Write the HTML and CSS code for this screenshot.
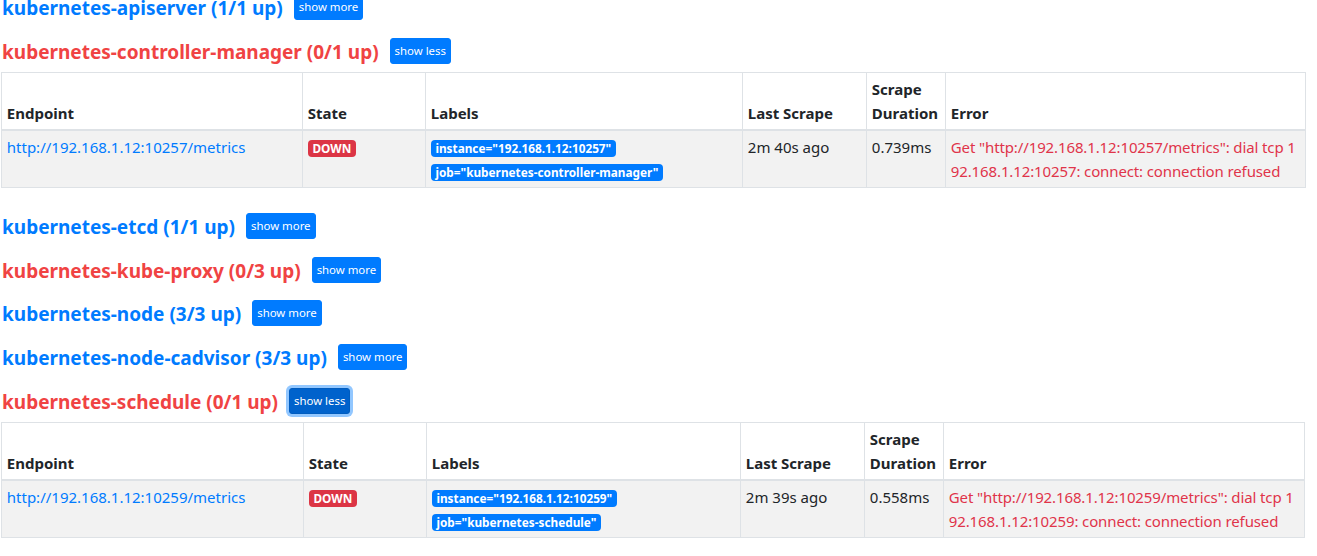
FILE: index.html
```html
<!DOCTYPE html>
<html>
<head>
<meta charset="utf-8">
<link rel="stylesheet" href="styles.css">
</head>
<body>
<div class="page">
  <section class="pool">
    <div class="pool-head">
      <h2 class="pool-title"><a class="up">kubernetes-apiserver (1/1 up)</a></h2>
      <button class="btn">show more</button>
    </div>
  </section>

  <section class="pool">
    <div class="pool-head">
      <h2 class="pool-title"><a class="down">kubernetes-controller-manager (0/1 up)</a></h2>
      <button class="btn">show less</button>
    </div>
    <table class="targets">
      <colgroup>
        <col class="c-endpoint"><col class="c-state"><col class="c-labels"><col class="c-last"><col class="c-dur"><col class="c-err">
      </colgroup>
      <thead>
        <tr><th>Endpoint</th><th>State</th><th>Labels</th><th>Last Scrape</th><th>Scrape Duration</th><th>Error</th></tr>
      </thead>
      <tbody>
        <tr>
          <td><a class="endpoint">http://192.168.1.12:10257/metrics</a></td>
          <td><span class="badge badge-down">DOWN</span></td>
          <td>
            <div class="label-line"><span class="badge badge-label">instance="192.168.1.12:10257"</span></div>
            <div class="label-line"><span class="badge badge-label">job="kubernetes-controller-manager"</span></div>
          </td>
          <td>2m 40s ago</td>
          <td>0.739ms</td>
          <td class="err">Get "http://192.168.1.12:10257/metrics": dial tcp 192.168.1.12:10257: connect: connection refused</td>
        </tr>
      </tbody>
    </table>
  </section>

  <section class="pool">
    <div class="pool-head">
      <h2 class="pool-title"><a class="up">kubernetes-etcd (1/1 up)</a></h2>
      <button class="btn">show more</button>
    </div>
  </section>

  <section class="pool">
    <div class="pool-head">
      <h2 class="pool-title"><a class="down">kubernetes-kube-proxy (0/3 up)</a></h2>
      <button class="btn">show more</button>
    </div>
  </section>

  <section class="pool">
    <div class="pool-head">
      <h2 class="pool-title"><a class="up">kubernetes-node (3/3 up)</a></h2>
      <button class="btn">show more</button>
    </div>
  </section>

  <section class="pool">
    <div class="pool-head">
      <h2 class="pool-title"><a class="up">kubernetes-node-cadvisor (3/3 up)</a></h2>
      <button class="btn">show more</button>
    </div>
  </section>

  <section class="pool">
    <div class="pool-head">
      <h2 class="pool-title"><a class="down">kubernetes-schedule (0/1 up)</a></h2>
      <button class="btn btn-focus">show less</button>
    </div>
    <table class="targets">
      <colgroup>
        <col class="c-endpoint2"><col class="c-state"><col class="c-labels2"><col class="c-last"><col class="c-dur"><col class="c-err2">
      </colgroup>
      <thead>
        <tr><th>Endpoint</th><th>State</th><th>Labels</th><th>Last Scrape</th><th>Scrape Duration</th><th>Error</th></tr>
      </thead>
      <tbody>
        <tr>
          <td><a class="endpoint">http://192.168.1.12:10259/metrics</a></td>
          <td><span class="badge badge-down">DOWN</span></td>
          <td>
            <div class="label-line"><span class="badge badge-label">instance="192.168.1.12:10259"</span></div>
            <div class="label-line"><span class="badge badge-label">job="kubernetes-schedule"</span></div>
          </td>
          <td>2m 39s ago</td>
          <td>0.558ms</td>
          <td class="err">Get "http://192.168.1.12:10259/metrics": dial tcp 192.168.1.12:10259: connect: connection refused</td>
        </tr>
      </tbody>
    </table>
  </section>
</div>
</body>
</html>
```

FILE: styles.css
```css
* { box-sizing: border-box; }
html, body { margin: 0; padding: 0; background: #fff; }
body {
  font-family: "Noto Sans", "Open Sans", sans-serif;
  font-size: 15px;
  line-height: 24px;
  color: #212529;
  overflow: hidden;
}
.page {
  margin-top: -6px;
  padding-left: 1px;
  width: 1305px;
}
.pool { padding-bottom: 9.6px; }
.pool-head {
  display: flex;
  align-items: center;
  gap: 11px;
  height: 26px;
  margin-bottom: 8px;
}
.pool-title {
  margin: 0;
  font-size: 19px;
  font-weight: 700;
  line-height: 26px;
  padding-left: 1px;
  padding-top: 2px;
}
.pool-title a { text-decoration: none; }
.pool-title .up { color: #007bff; }
.pool-title .down { color: #f04343; }

.btn {
  font-family: inherit;
  font-size: 11.4px;
  line-height: 18px;
  padding: 3px 4px;
  border: 1px solid #007bff;
  background: #007bff;
  color: #fff;
  border-radius: 3px;
  height: 26px;
  cursor: pointer;
}
.btn-focus {
  background: #0062cc;
  border-color: #005cbf;
  box-shadow: 0 0 0 3px rgba(38, 143, 255, 0.5);
}

.targets {
  width: 1304px;
  table-layout: fixed;
  border-collapse: collapse;
  margin-bottom: 16px;
  border: 1px solid #dee2e6;
}
.c-endpoint { width: 301px; }
.c-state { width: 123px; }
.c-labels { width: 317px; }
.c-last { width: 124px; }
.c-dur { width: 79px; }
.c-err { width: 360px; }
.c-endpoint2 { width: 302px; }
.c-labels2 { width: 314px; }
.c-err2 { width: 361px; }

.targets th, .targets td {
  padding: 4px 4.8px;
  border: 1px solid #dee2e6;
  text-align: left;
}
.targets th {
  vertical-align: bottom;
  font-weight: 700;
  border-bottom: 2px solid #dee2e6;
}
.targets td {
  vertical-align: top;
  background: #f2f2f2;
}
.endpoint { color: #007bff; text-decoration: none; }
.err { color: #e0344a; word-break: break-all; letter-spacing: -0.12px; }

.badge {
  display: inline-block;
  font-size: 11.8px;
  font-weight: 700;
  line-height: 1;
  padding: 3px 4.6px;
  border-radius: 4px;
  color: #fff;
  white-space: nowrap;
  vertical-align: baseline;
}
.badge-down { background: #dc3545; margin-top: 3px; }
.badge-label { background: #007bff; }
.label-line { line-height: 24px; }
```
